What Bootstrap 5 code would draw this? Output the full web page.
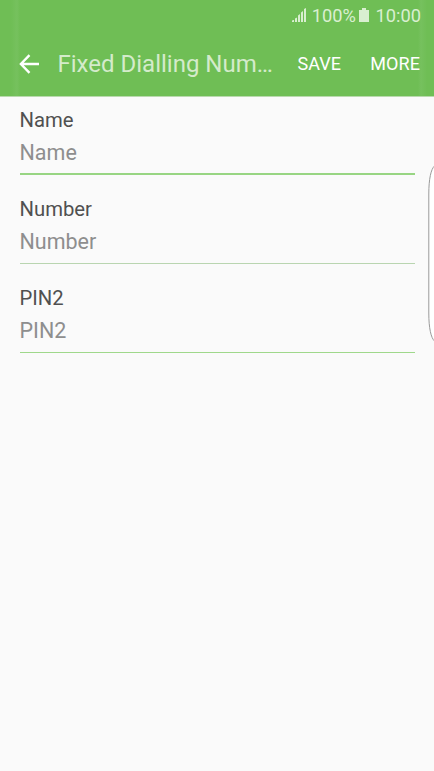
<!DOCTYPE html>
<html lang="en">
<head>
<meta charset="utf-8">
<meta name="viewport" content="width=device-width, initial-scale=1">
<title>Fixed Dialling Numbers</title>
<link href="https://cdn.jsdelivr.net/npm/bootstrap@5.3.0/dist/css/bootstrap.min.css" rel="stylesheet">
<style>
body{font-family:Roboto,"Noto Sans",sans-serif;background:#fafafa;height:771px;overflow:hidden;color:#555}
.app-header{height:97px;background:linear-gradient(90deg,#6fbe55 0,#6fbe55 11px,#76c15e 17px,#6fbe55 20px,#6fbe55 418px,#76c15e 421px,#6fbe55 427px);border-bottom:1px solid #b9d9ae}
.status{height:31px;padding-right:13px;font-size:18.3px;line-height:29px;padding-bottom:1px;color:#d9efd0}
.clock{margin-left:6px}
.signal-percent{margin-left:5px;margin-right:3.500px}
.toolbar{height:65px;padding:0 14px 0 19px}
.page-title{font-size:24px;line-height:32px;color:#d4ebcb;margin-left:18.500px;font-weight:400}
.action{font-size:18px;line-height:24px;color:#fff;letter-spacing:.1px}
.action-more{margin-left:29px}
.fields{padding:9px 19px 0 19.500px}
.field{height:89px}
.field label{display:block;font-size:20.3px;line-height:28px;color:#505050}
.field .form-control{font-size:21.5px;line-height:30px;height:41px;padding:3px 0 7px;border-bottom:1px solid #9fd88b}
.field .form-control::placeholder{color:#8e8e8e;opacity:1}
.field .form-control.active-line{border-bottom:2px solid #98d583;padding:3px 0 6px}
.field .form-control.soft-line{border-bottom-color:#b9d5b0}
.edge-handle{right:0;top:164px}
</style>
<script src="https://cdn.jsdelivr.net/npm/bootstrap@5.3.0/dist/js/bootstrap.bundle.min.js"></script>
</head>
<body class="position-relative">
<header class="app-header">
  <div class="status d-flex justify-content-end align-items-center">
    <svg width="15" height="15" viewBox="0 0 15 15" fill="currentColor" aria-hidden="true"><path d="M0 14v-1.500L1.500 12H2v2zM3 14v-3.500l2-1V14zM6 14V7.500L8 6v8zM9 14V4.500L11 3v11zM12 14V1l2-1v14z"/></svg>
    <span class="signal-percent">100%</span>
    <svg width="10" height="15" viewBox="0 0 10 15" fill="currentColor" aria-hidden="true"><path d="M3 0h4v2h3v12H0V2h3z"/></svg>
    <span class="clock">10:00</span>
  </div>
  <nav class="toolbar d-flex align-items-center">
    <svg width="20" height="20" viewBox="0 0 20 20" fill="none" stroke="#fff" stroke-width="2.400" aria-label="Back"><path d="M10.500 1.200 1.900 10l8.600 8.800M2 10h18"/></svg>
    <h1 class="page-title text-nowrap mb-0">Fixed Dialling Num…</h1>
    <a class="action text-decoration-none ms-auto" href="#">SAVE</a>
    <a class="action action-more text-decoration-none" href="#">MORE</a>
  </nav>
</header>
<main class="fields">
  <div class="field"><label for="name">Name</label><input id="name" class="form-control border-top-0 border-start-0 border-end-0 rounded-0 bg-transparent shadow-none active-line" placeholder="Name"></div>
  <div class="field"><label for="number">Number</label><input id="number" class="form-control border-top-0 border-start-0 border-end-0 rounded-0 bg-transparent shadow-none soft-line" placeholder="Number"></div>
  <div class="field"><label for="pin">PIN2</label><input id="pin" class="form-control border-top-0 border-start-0 border-end-0 rounded-0 bg-transparent shadow-none" placeholder="PIN2"></div>
</main>
<svg class="edge-handle position-absolute" width="6" height="179" viewBox="0 0 6 179" fill="#fff" stroke="#999" aria-hidden="true"><path d="M6.500 2C3 5 .8 15 .8 30v119c0 15 2.200 25 5.700 28"/></svg>
</body>
</html>
